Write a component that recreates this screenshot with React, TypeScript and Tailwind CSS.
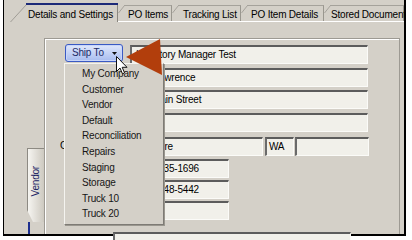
import React from "react";

const MENU = [
  "My Company",
  "Customer",
  "Vendor",
  "Default",
  "Reconciliation",
  "Repairs",
  "Staging",
  "Storage",
  "Truck 10",
  "Truck 20",
];

const TABS = [
  { label: "PO Items", w: "w-[54px]", pad: "pl-[10px]", width: 54 },
  { label: "Tracking List", w: "w-[69px]", pad: "pl-[11px]", width: 69 },
  { label: "PO Item Details", w: "w-[83px]", pad: "pl-[10px]", width: 83 },
  { label: "Stored Documents", w: "w-[80px]", pad: "pl-[7px]", width: 80 },
];

function Field({ w, text, pad = "pl-[4px]" }: { w: string; text?: string; pad?: string }) {
  return (
    <div
      className={`${w} h-[19px] flex-none flex items-center overflow-hidden whitespace-nowrap border-t-2 border-l-2 border-r border-b border-t-[#5c5c5c] border-l-[#6a6a6a] border-r-[#fbfbf8] border-b-[#fbfbf8] bg-[#f1f0ea] ${pad} text-[10px] leading-[12px] text-black`}
    >
      {text}
    </div>
  );
}

export default function App() {
  return (
    <div className="relative w-[412px] h-[240px] bg-white pl-[3px] overflow-hidden font-['Liberation_Sans',Arial,sans-serif] tracking-[-0.2px]">
      <div className="flex flex-col w-[403px] h-[236px] border-l border-r-2 border-b-2 border-black bg-[#d4d0c8]">
        {/* tab strip */}
        <div className="flex items-end h-[22px] flex-none">
          <div className="w-[6px] h-[17px] flex-none" />
          <div className="relative w-[108px] h-[19px] flex-none">
            <svg className="absolute inset-0" width="108" height="19">
              <polygon points="0,19 16,1 108,1 108,19" fill="#d4d0c8" />
              <line x1="0.5" y1="19" x2="16.5" y2="1.5" stroke="#a09d96" />
              <rect x="16" y="0" width="92" height="2" fill="#1d2a78" />
              <line x1="107.5" y1="2" x2="107.5" y2="19" stroke="#8a8780" />
            </svg>
            <div className="relative pl-[18px] pt-[6px] text-[10px] leading-[12px] text-black whitespace-nowrap">
              Details and Settings
            </div>
          </div>
          {TABS.map((t) => (
            <div key={t.label} className={`relative ${t.w} h-[17px] flex-none border-b border-white overflow-hidden`}>
              <svg className="absolute inset-0" width={t.width} height="17">
                <line x1="0.5" y1="8" x2="6.5" y2="0.5" stroke="#a5a29b" />
                <line x1="6" y1="0.5" x2={t.width} y2="0.5" stroke="#a5a29b" />
                <line x1={t.width - 0.5} y1="0.5" x2={t.width - 0.5} y2="17" stroke="#9a978f" />
              </svg>
              <div className={`relative ${t.pad} pt-[4px] text-[10px] leading-[12px] text-black whitespace-nowrap`}>
                {t.label}
              </div>
            </div>
          ))}
        </div>

        {/* body */}
        <div className="flex flex-1 min-h-0">
          <div className="flex flex-col w-[40px] flex-none">
            <div className="mt-[126px] ml-[23px] w-[17px] h-[74px] flex-none flex items-center justify-center pb-[8px] border-l border-t border-[#8d8a83] bg-gradient-to-r from-[#f6f5f1] to-[#cdc9c0] [clip-path:polygon(0_0,100%_0,100%_100%,6px_100%,0_calc(100%-12px))]">
              <span className="[writing-mode:vertical-rl] rotate-180 text-[10px] leading-[12px] text-[#1b2464]">
                Vendor
              </span>
            </div>
            <div className="ml-[24px] w-[2px] flex-1 bg-[#1d2f8f]" />
          </div>

          <div className="flex flex-col flex-1 mt-[16px] mr-[4px] border-l border-t border-r border-[#9d9a93] shadow-[inset_1px_1px_0_#ffffff]">
            {/* row 1 */}
            <div className="flex items-start mt-[5px]">
              <div className="w-[85px] flex-none pl-[20px]">
                <div className="flex items-center justify-between w-[58px] h-[18px] rounded-[3px] border border-[#3a5ac4] bg-gradient-to-b from-[#e0e8fc] to-[#a8bcef] pl-[6px] pr-[5px] shadow-[inset_0_0_0_1px_#c9d6f8]">
                  <span className="text-[10px] leading-[12px] text-[#1b2a66]">Ship To</span>
                  <svg width="5" height="3" viewBox="0 0 5 3">
                    <polygon points="0,0 5,0 2.5,3" fill="#111" />
                  </svg>
                </div>
              </div>
              <div className="mt-[1px]">
                <Field w="w-[238px]" text="Inventory Manager Test" />
              </div>
            </div>
            {/* row 2 */}
            <div className="flex mt-[4px]">
              <div className="w-[85px] flex-none" />
              <Field w="w-[238px]" text="Jim Lawrence" />
            </div>
            {/* row 3 */}
            <div className="flex mt-[3px]">
              <div className="w-[85px] flex-none" />
              <Field w="w-[238px]" text="12 Main Street" pad="pl-[7px]" />
            </div>
            {/* row 4 */}
            <div className="flex mt-[4px]">
              <div className="w-[85px] flex-none" />
              <Field w="w-[238px]" />
            </div>
            {/* row 5 */}
            <div className="flex mt-[5px]">
              <div className="w-[85px] flex-none pl-[15px] pt-[3px] text-[10px] leading-[12px] text-black">City</div>
              <Field w="w-[133px]" text="Anywhere" pad="pl-[0px] indent-[-2px]" />
              <div className="ml-[2px]">
                <Field w="w-[29px]" text="WA" pad="pl-[2px]" />
              </div>
              <div className="ml-[1px]">
                <Field w="w-[74px]" />
              </div>
            </div>
            {/* row 6 */}
            <div className="flex mt-[3px]">
              <div className="w-[85px] flex-none" />
              <Field w="w-[99px]" text="509-935-1696" pad="pl-[7px]" />
            </div>
            {/* row 7 */}
            <div className="flex mt-[2px]">
              <div className="w-[85px] flex-none" />
              <Field w="w-[99px]" text="509-548-5442" pad="pl-[7px]" />
            </div>
            {/* row 8 */}
            <div className="flex mt-[2px]">
              <div className="w-[85px] flex-none" />
              <Field w="w-[99px]" />
            </div>
            {/* row 9 */}
            <div className="flex mt-[12px]">
              <div className="w-[68px] flex-none" />
              <Field w="w-[238px]" />
            </div>
          </div>
        </div>
      </div>

      {/* dropdown menu */}
      <div className="absolute left-[64px] top-[63px] w-[100px] h-[162px] flex flex-col pt-[2px] border border-t-[#f4f3ef] border-l-[#f4f3ef] border-r-[#7e7b75] border-b-[#7e7b75] bg-[#d4d0c8] shadow-[1px_1px_0_#9a978f]">
        {MENU.map((m) => (
          <div key={m} className="h-[15.6px] leading-[15.6px] pl-[17px] text-[10px] text-[#161616] whitespace-nowrap">
            {m}
          </div>
        ))}
      </div>

      {/* callout arrow */}
      <svg className="absolute left-[124px] top-[37px]" width="42" height="42" viewBox="0 0 42 42">
        <polygon points="2,20 36,2 38,38" fill="#b23e0c" />
      </svg>

      {/* mouse pointer */}
      <svg className="absolute left-[116px] top-[56px]" width="13" height="20" viewBox="0 0 13 20">
        <path d="M0.5 0.5 L0.5 15.5 L4 12 L6.5 17.8 L8.6 16.9 L6.2 11.3 L11 11.3 Z" fill="#ffffff" stroke="#111" strokeWidth="1" strokeLinejoin="round" />
      </svg>
    </div>
  );
}
